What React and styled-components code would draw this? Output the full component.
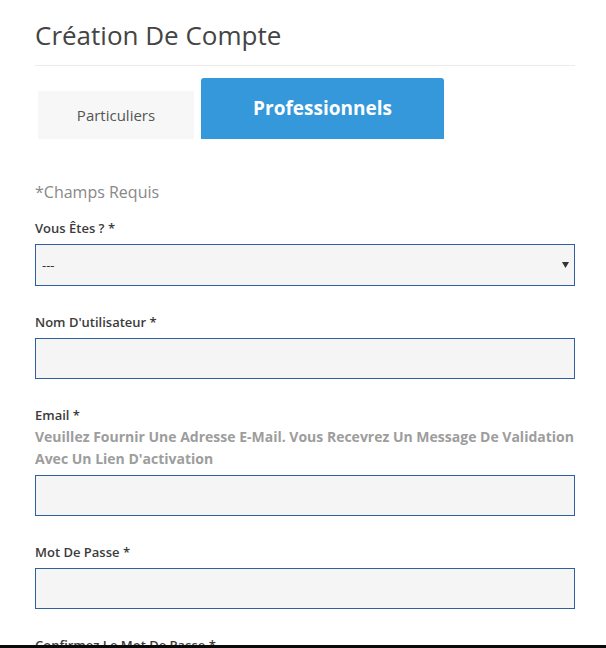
import React from "react";
import styled, { createGlobalStyle } from "styled-components";

const Global = createGlobalStyle`
  html, body { margin: 0; padding: 0; background: #fff; }
  body { font-family: "Open Sans", "Liberation Sans", sans-serif; overflow: hidden; }
  * { box-sizing: border-box; }
`;

const Page = styled.div`
  padding: 17px 31px 0 35px;
  height: 648px;
  overflow: hidden;
`;

const Header = styled.header`
  border-bottom: 1px solid #ececec;
  padding-bottom: 12px;
`;

const Title = styled.h1`
  margin: 0;
  font-size: 26px;
  line-height: 36px;
  font-weight: 400;
  color: #444;
`;

const Tabs = styled.nav`
  display: flex;
  align-items: flex-end;
  gap: 7px;
  margin-top: 12px;
  padding-left: 3px;
`;

const Tab = styled.button`
  border: none;
  font-family: "Open Sans", "Liberation Sans", sans-serif;
  cursor: pointer;
  display: flex;
  align-items: center;
  justify-content: center;
  padding: 0;
  width: ${(p) => (p.$active ? "243px" : "156px")};
  height: ${(p) => (p.$active ? "61px" : "48px")};
  background: ${(p) => (p.$active ? "#3498db" : "#f7f7f7")};
  color: ${(p) => (p.$active ? "#fff" : "#555")};
  font-size: ${(p) => (p.$active ? "19px" : "15px")};
  font-weight: ${(p) => (p.$active ? 700 : 400)};
  border-radius: ${(p) => (p.$active ? "3px 3px 0 0" : "0")};
  padding-bottom: ${(p) => (p.$active ? "1px" : "0")};
`;

const Required = styled.p`
  margin: 42px 0 14px;
  font-size: 16px;
  line-height: 22px;
  color: #888;
`;

const Field = styled.div`
  display: flex;
  flex-direction: column;
  margin-bottom: 25px;
`;

const Label = styled.label`
  font-size: 13px;
  line-height: 22px;
  font-weight: 600;
  color: #3b3b3b;
  margin-bottom: 5px;
`;

const Help = styled.p`
  margin: -5px 0 5px;
  font-size: 14px;
  line-height: 22px;
  font-weight: 700;
  color: #9d9d9d;
`;

const Input = styled.input`
  height: 41px;
  width: 100%;
  background: #f5f5f5;
  border: 1px solid #2f5f9c;
  border-radius: 0;
  padding: 0 7px;
  font-family: "Open Sans", "Liberation Sans", sans-serif;
  font-size: 13px;
  outline: none;
`;

const SelectWrap = styled.div`
  position: relative;
  width: 100%;
`;

const Select = styled.select`
  appearance: none;
  -webkit-appearance: none;
  height: 42px;
  width: 100%;
  background: #f5f5f5;
  border: 1px solid #2f5f9c;
  border-radius: 0;
  padding: 0 6px;
  font-family: "Open Sans", "Liberation Sans", sans-serif;
  font-size: 13px;
  color: #333;
  outline: none;
`;

const Arrow = styled.svg`
  position: absolute;
  right: 6px;
  top: 18px;
  width: 7px;
  height: 6px;
  pointer-events: none;
`;

const BottomBar = styled.div`
  position: fixed;
  left: 0;
  right: 0;
  bottom: 0;
  height: 3px;
  background: #0a0a0a;
`;

export default function App() {
  return (
    <>
      <Global />
      <Page>
        <Header>
          <Title>Création De Compte</Title>
        </Header>
        <Tabs>
          <Tab>Particuliers</Tab>
          <Tab $active>Professionnels</Tab>
        </Tabs>
        <Required>*Champs Requis</Required>
        <Field>
          <Label>Vous Êtes ? *</Label>
          <SelectWrap>
            <Select defaultValue="">
              <option value="">---</option>
            </Select>
            <Arrow viewBox="0 0 7 6">
              <path d="M0 0 H7 L3.5 6 Z" fill="#333" />
            </Arrow>
          </SelectWrap>
        </Field>
        <Field>
          <Label>Nom D'utilisateur *</Label>
          <Input type="text" />
        </Field>
        <Field>
          <Label>Email *</Label>
          <Help>
            Veuillez Fournir Une Adresse E-Mail. Vous Recevrez Un Message De
            Validation Avec Un Lien D'activation
          </Help>
          <Input type="email" />
        </Field>
        <Field>
          <Label>Mot De Passe *</Label>
          <Input type="password" />
        </Field>
        <Field>
          <Label>Confirmez Le Mot De Passe *</Label>
          <Input type="password" />
        </Field>
      </Page>
      <BottomBar />
    </>
  );
}
